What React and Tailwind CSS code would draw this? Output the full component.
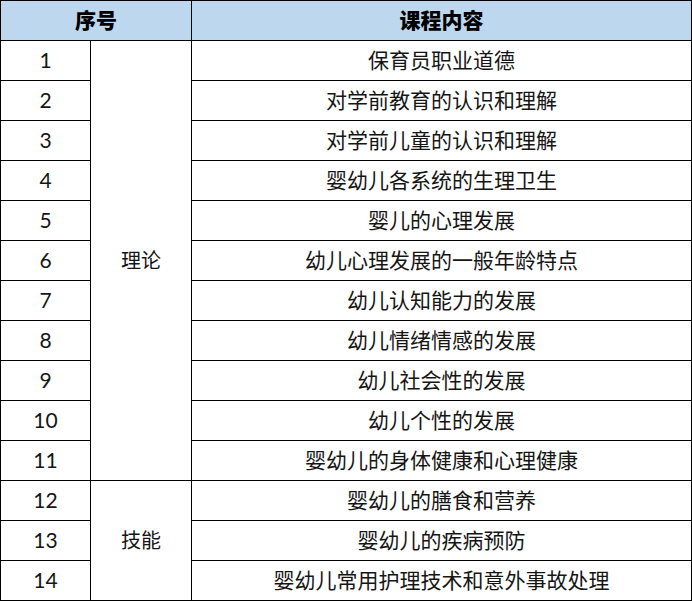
import React from "react";

const rows = [
  "保育员职业道德",
  "对学前教育的认识和理解",
  "对学前儿童的认识和理解",
  "婴幼儿各系统的生理卫生",
  "婴儿的心理发展",
  "幼儿心理发展的一般年龄特点",
  "幼儿认知能力的发展",
  "幼儿情绪情感的发展",
  "幼儿社会性的发展",
  "幼儿个性的发展",
  "婴幼儿的身体健康和心理健康",
  "婴幼儿的膳食和营养",
  "婴幼儿的疾病预防",
  "婴幼儿常用护理技术和意外事故处理",
];

const cjk = { fontFamily: '"Noto Sans CJK SC", "Noto Sans", sans-serif' };
const num = { fontFamily: 'Lato, "Noto Sans", sans-serif' };

export default function App() {
  return (
    <div className="bg-white w-[692px] h-[601px] overflow-hidden">
      <table className="w-[691px] table-fixed border-collapse text-[#151515]" style={cjk}>
        <colgroup>
          <col className="w-[90px]" />
          <col className="w-[101px]" />
          <col className="w-[500px]" />
        </colgroup>
        <thead>
          <tr className="h-[40px] bg-[#bdd7ee]">
            <th colSpan={2} className="border border-black p-0 pb-[2px] text-[21px] leading-none font-black text-black">序号</th>
            <th className="border border-black p-0 pb-[2px] text-[21px] leading-none font-black text-black">课程内容</th>
          </tr>
        </thead>
        <tbody>
          {rows.map((r, i) => (
            <tr key={i} className="h-[40px]">
              <td className="border border-black p-0 pb-[2px] text-center text-[21px] leading-none" style={num}>{i + 1}</td>
              {i === 0 && (
                <td rowSpan={11} className="border border-black p-0 pb-[2px] text-center text-[20px] leading-none">理论</td>
              )}
              {i === 11 && (
                <td rowSpan={3} className="border border-black p-0 pb-[2px] text-center text-[20px] leading-none">技能</td>
              )}
              <td className="border border-black p-0 pb-[2px] text-center text-[21px] leading-none">{r}</td>
            </tr>
          ))}
        </tbody>
      </table>
    </div>
  );
}
